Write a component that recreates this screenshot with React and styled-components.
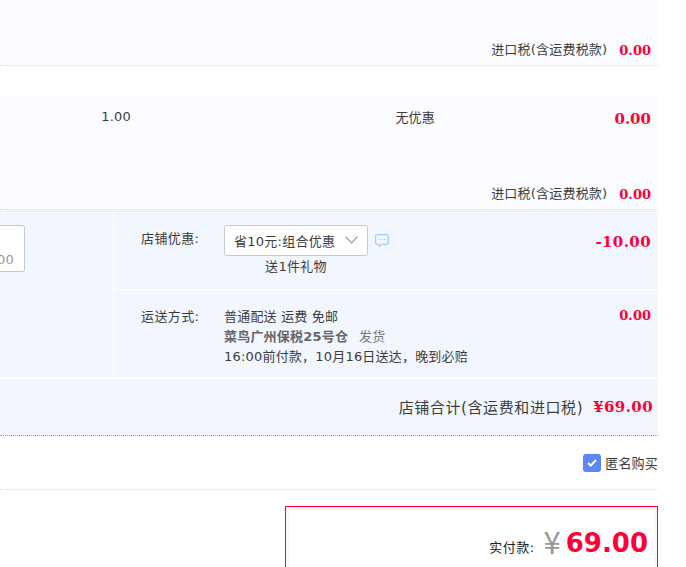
import React from "react";
import styled, { createGlobalStyle } from "styled-components";

const Global = createGlobalStyle`
  html, body { margin: 0; padding: 0; background: #fff; overflow: hidden; }
  body { font-family: "DejaVu Sans", "Noto Sans CJK SC", sans-serif; font-size: 13px; letter-spacing: 0.2px; color: #3c3c3c; }
`;
const SERIF = `"DejaVu Serif", "Noto Sans CJK SC", serif`;

const Page = styled.div`
  width: 658px; height: 567px; overflow: hidden; display: flex; flex-direction: column;
`;
const ItemBlock = styled.section`
  height: ${p => p.$h}px; margin-top: ${p => p.$mt || 0}px; background: #fbfcff;
  border-bottom: 1px dotted #dadada; box-sizing: border-box; flex: none;
  display: flex; flex-direction: column;
`;
const ItemRow = styled.div`
  flex: 1; display: flex; align-items: flex-start; padding-top: 12px;
`;
const Qty = styled.div`width: 131px; text-align: right; font-size: 13px; line-height: 16px; flex: none; margin-top: 1px;`;
const Promo = styled.div`width: 304px; text-align: right; font-size: 13px; line-height: 20px; flex: none;`;
const ItemPrice = styled.div`flex: 1; text-align: right; padding-right: 7px; font-size: 15px; font-weight: 700; color: #ff0036; line-height: 20px; margin-top: 1px; font-family: ${SERIF}; letter-spacing: 0;`;
const TaxRow = styled.div`
  height: 30px; display: flex; justify-content: flex-end; align-items: center; gap: 12px; padding-right: 7px; font-size: 13px; flex: none; line-height: 16px;
`;
const TaxValue = styled.span`color: #ff0036; font-weight: 700; font-size: 13px; letter-spacing: 0; margin-top: 1px; font-family: ${SERIF};`;
const Hairline = styled.div`height: 1px; margin-top: 1px; background: #f0f0f0; flex: none;`;

const Shop = styled.section`
  margin-top: 1px; height: 165px; background: #f1f6ff; display: flex; flex: none; border-bottom: 1px solid #fff; box-sizing: content-box;
`;
const MessageCol = styled.div`
  width: 113px; flex: none; border-right: 1px solid #fff; padding-top: 12px; display: flex; align-items: flex-start;
`;
const MessageBox = styled.div`
  width: 25px; height: 47px; box-sizing: border-box; background: #fff; border: 1px solid #c8c8c8; border-left: none; border-radius: 0 3px 3px 0;
  display: flex; align-items: flex-end; justify-content: flex-end; padding: 0 10px 3px 0; overflow: hidden; color: #999; font-size: 13px; line-height: 16px;
`;
const Options = styled.div`flex: 1; display: flex; flex-direction: column; min-width: 0;`;
const OptionRow = styled.div`
  height: ${p => p.$h}px; flex: none; box-sizing: border-box; display: flex; padding: ${p => p.$pt}px 7px 0 27px;
  & + & { border-top: 1px solid #fff; }
`;
const OptionLabel = styled.div`width: 83px; flex: none; font-size: 13px; line-height: 20px; letter-spacing: 0.4px; padding-top: ${p => p.$pt || 0}px;`;
const OptionBody = styled.div`flex: 1; min-width: 0;`;
const SelectRow = styled.div`display: flex; align-items: center; gap: 7px;`;
const Select = styled.div`
  width: 144px; height: 31px; box-sizing: border-box; background: #fff; border: 1px solid #c5c9d6; border-radius: 3px;
  display: flex; align-items: center; justify-content: space-between; padding: 0 9px 1px; font-size: 13px; letter-spacing: 0.25px; white-space: nowrap;
`;
const Gift = styled.div`width: 144px; text-align: center; font-size: 13px; line-height: 18px; margin-top: 2px; letter-spacing: 0.3px;`;
const OptionValue = styled.div`
  color: #ff0036; font-weight: 700; font-size: ${p => p.$size}px; line-height: 20px; text-align: right; flex: none; font-family: ${SERIF};
  letter-spacing: ${p => p.$spacing || 0}px; margin-top: ${p => p.$mt || 0}px;
`;
const ShipLine = styled.div`font-size: 13px; line-height: 20px; white-space: nowrap;`;
const Warehouse = styled.b`font-weight: 700; color: #666;`;
const Muted = styled.span`color: #777; margin-left: 11px;`;

const Total = styled.section`
  height: 57px; box-sizing: border-box; background: #f1f6ff; border-bottom: 1px dotted #80a0c8; flex: none;
  display: flex; justify-content: flex-end; align-items: center; gap: 10px; padding: 0 5px 1px 0; font-size: 15px; letter-spacing: 0.6px;
`;
const TotalValue = styled.span`color: #ff0036; font-weight: 700; font-size: 15px; letter-spacing: 0.4px; margin-top: 1px; font-family: ${SERIF};`;

const Anon = styled.section`
  height: 54px; box-sizing: border-box; border-bottom: 1px dotted #dadada; flex: none;
  display: flex; justify-content: flex-end; align-items: center; gap: 4px; font-size: 13px; white-space: nowrap;
`;
const Check = styled.span`
  width: 18px; height: 18px; border-radius: 3px; background: #5b87fa; display: flex; align-items: center; justify-content: center; flex: none;
`;
const PayWrap = styled.div`display: flex; justify-content: flex-end; margin-top: 16px; flex: none;`;
const PayBox = styled.section`
  width: 373px; height: 80px; box-sizing: border-box; border: 1px solid #ff0036; background: #fff;
`;
const PayInner = styled.div`
  border: solid #fff5ee; border-width: 3px 3px 0 3px; height: 100%; box-sizing: border-box;
  display: flex; justify-content: flex-end; align-items: flex-start; padding: 16px 6px 0 0;
`;
const PayLabel = styled.span`font-size: 13px; font-weight: 400; line-height: 16px; color: #222; margin-top: 14px; margin-right: 9px; letter-spacing: 0.5px;`;
const Yen = styled.span`font-size: 31px; line-height: 34px; color: #999; margin-right: 5px; margin-top: -2px; font-family: "Noto Sans CJK SC", sans-serif; letter-spacing: 0;`;
const PayValue = styled.span`font-size: 26px; line-height: 34px; color: #ff0036; font-weight: 700; letter-spacing: 0;`;

const Chevron = () => (
  <svg width="13" height="8" viewBox="0 0 13 8" fill="none" stroke="#8a8f9a" strokeWidth="1.1"><path d="M.6.6 6.5 7 12.4.6" /></svg>
);
const Bubble = () => (
  <svg width="14" height="14" viewBox="0 0 14 14" fill="none" stroke="#8fc4ee" strokeWidth="1">
    <path d="M1.5.7h11a.8.8 0 0 1 .8.8v8a.8.8 0 0 1-.8.8H7l-2.6 2.6v-2.6H1.5a.8.8 0 0 1-.8-.8v-8a.8.8 0 0 1 .8-.8Z" />
    <path d="M4 5.5h1M6.5 5.5h1M9 5.5h1" />
  </svg>
);
const Tick = () => (
  <svg width="10" height="8" viewBox="0 0 10 8" fill="none" stroke="#fff" strokeWidth="2"><path d="M1 4 3.8 6.6 9 1" /></svg>
);

export default function App() {
  return (
    <Page>
      <Global />
      <ItemBlock $h={66}>
        <ItemRow />
        <TaxRow>进口税(含运费税款)<TaxValue>0.00</TaxValue></TaxRow>
      </ItemBlock>
      <ItemBlock $h={114} $mt={30}>
        <ItemRow>
          <Qty>1.00</Qty>
          <Promo>无优惠</Promo>
          <ItemPrice>0.00</ItemPrice>
        </ItemRow>
        <TaxRow>进口税(含运费税款)<TaxValue>0.00</TaxValue></TaxRow>
      </ItemBlock>
      <Hairline />
      <Shop>
        <MessageCol><MessageBox>00</MessageBox></MessageCol>
        <Options>
          <OptionRow $h={76} $pt={12}>
            <OptionLabel $pt={4}>店铺优惠:</OptionLabel>
            <OptionBody>
              <SelectRow>
                <Select>省10元:组合优惠<Chevron /></Select>
                <Bubble />
              </SelectRow>
              <Gift>送1件礼物</Gift>
            </OptionBody>
            <OptionValue $size={15} $mt={7} $spacing={0.4}>-10.00</OptionValue>
          </OptionRow>
          <OptionRow $h={89} $pt={17}>
            <OptionLabel>运送方式:</OptionLabel>
            <OptionBody>
              <ShipLine>普通配送 运费 免邮</ShipLine>
              <ShipLine><Warehouse>菜鸟广州保税25号仓</Warehouse><Muted>发货</Muted></ShipLine>
              <ShipLine>16:00前付款，10月16日送达，晚到必赔</ShipLine>
            </OptionBody>
            <OptionValue $size={13} $mt={-1}>0.00</OptionValue>
          </OptionRow>
        </Options>
      </Shop>
      <Total>店铺合计(含运费和进口税)<TotalValue>¥69.00</TotalValue></Total>
      <Anon><Check><Tick /></Check>匿名购买</Anon>
      <PayWrap>
        <PayBox>
          <PayInner>
            <PayLabel>实付款:</PayLabel>
            <Yen>¥</Yen>
            <PayValue>69.00</PayValue>
          </PayInner>
        </PayBox>
      </PayWrap>
    </Page>
  );
}
